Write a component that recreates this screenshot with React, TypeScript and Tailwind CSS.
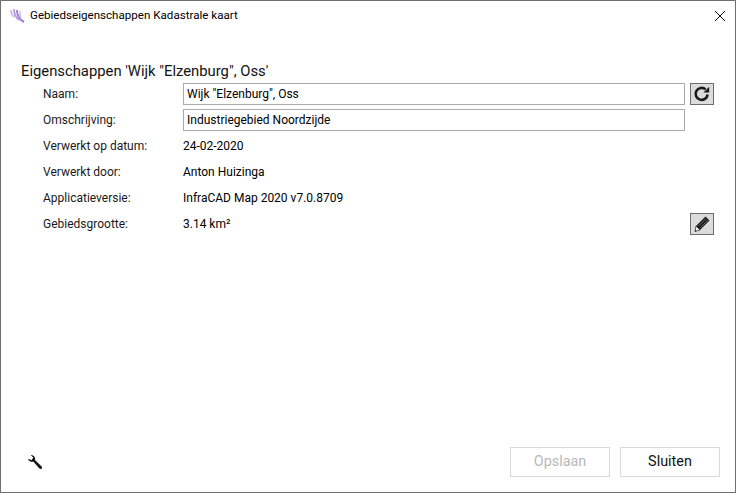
import React from 'react';

const font = "font-['Roboto','Open_Sans',sans-serif]";

function Logo() {
  return (
    <svg width="17" height="16" viewBox="0 0 17 16" fill="none" className="shrink-0">
      <path d="M2 2 C2 5 2.5 7 5 9" stroke="#c9b8e8" strokeWidth="1.6" />
      <path d="M5 1 C5 5 6 9 10 12" stroke="#b49ae2" strokeWidth="1.8" />
      <path d="M8 2 C8 6 9.5 11 15 14" stroke="#a47fdc" strokeWidth="2" />
      <path d="M11 3 C10.5 6 11 8 12 10" stroke="#cdbdea" strokeWidth="1.4" />
    </svg>
  );
}

function IconButton({ children }: { children: React.ReactNode }) {
  return (
    <button className="w-6 h-[22px] shrink-0 flex items-center justify-center bg-[#dcdcdc] border-[1.5px] border-[#6e6e6e]">
      {children}
    </button>
  );
}

function Row({ label, children }: { label: string; children: React.ReactNode }) {
  return (
    <div className="h-[26px] flex items-center pl-[23px]">
      <div className="w-[140px] shrink-0 text-[#1a1a1a]">{label}</div>
      {children}
    </div>
  );
}

function Field({ value }: { value: string }) {
  return (
    <div className="w-[502px] h-[22px] shrink-0 border border-[#ababab] px-[3px] flex items-center leading-none">
      {value}
    </div>
  );
}

export default function App() {
  return (
    <div className={`${font} w-[736px] h-[493px] bg-white border border-[#6f6f6f] flex flex-col text-[12px] text-black overflow-hidden`}>
      <div className="h-[30px] flex items-center pl-[8px] pr-[9px] gap-[4px] shrink-0">
        <Logo />
        <span className="text-[11.6px]">Gebiedseigenschappen Kadastrale kaart</span>
        <svg width="12" height="12" viewBox="0 0 12 12" className="ml-auto" fill="none">
          <path d="M1 1 L11 11 M11 1 L1 11" stroke="#111" strokeWidth="1" />
        </svg>
      </div>

      <div className="pt-[30px] pl-[19px] flex-1">
        <h1 className="text-[14.8px] leading-[20px] h-[20px] pl-[1px] text-[#111]">Eigenschappen 'Wijk "Elzenburg", Oss'</h1>
        <Row label="Naam:">
          <Field value={'Wijk "Elzenburg", Oss'} />
          <div className="ml-[5px]">
            <IconButton>
              <svg width="18" height="18" viewBox="0 0 18 18" fill="none">
                <path d="M14.6 9.5 A6 6 0 1 1 12.6 4.4" stroke="#1a1a1a" strokeWidth="2.6" />
                <path d="M10.4 7.6 H16.2 V1.8 Z" fill="#1a1a1a" />
              </svg>
            </IconButton>
          </div>
        </Row>
        <Row label="Omschrijving:">
          <Field value="Industriegebied Noordzijde" />
        </Row>
        <Row label="Verwerkt op datum:">
          <span>24-02-2020</span>
        </Row>
        <Row label="Verwerkt door:">
          <span>Anton Huizinga</span>
        </Row>
        <Row label="Applicatieversie:">
          <span>InfraCAD Map 2020 v7.0.8709</span>
        </Row>
        <Row label="Gebiedsgrootte:">
          <span className="w-[507px] shrink-0">3.14 km²</span>
          <IconButton>
            <svg width="18" height="18" viewBox="0 0 18 18" fill="none">
              <path d="M12.5 1.5 L16.5 5.5 L7 15 L3 11 Z" fill="#1c1c1c" />
              <path d="M3 11 L7 15 L2 16.5 Z" fill="#f2f2f2" stroke="#333" strokeWidth="0.8" />
              <path d="M1.8 16.6 L3.4 16.1 L2.4 15 Z" fill="#111" />
              <path d="M5.5 11 L13 3.5 M7.5 12.5 L15 5" stroke="#777" strokeWidth="0.8" />
            </svg>
          </IconButton>
        </Row>
      </div>

      <div className="h-[45px] shrink-0 flex items-start pl-[26px] pr-[15px]">
        <svg width="17" height="17" viewBox="0 0 17 17" className="mt-[7px]" fill="none">
          <path d="M1 4.4 C1.6 7.2 4 8.2 6.2 7.4 L12.4 14.6 C13.8 16 16 13.8 14.6 12.4 L8 6 C8.6 3.4 6.8 1 3.8 1 L6.4 3.8 L4.2 6.2 Z" fill="#111" />
        </svg>
        <button disabled className="ml-auto w-[100px] h-[30px] border border-[#d9d9d9] text-[#b8b8b8] text-[14.4px]">Opslaan</button>
        <button className="ml-[10px] w-[100px] h-[30px] border border-[#d9d9d9] text-[#111] text-[14.4px]">Sluiten</button>
      </div>
    </div>
  );
}
